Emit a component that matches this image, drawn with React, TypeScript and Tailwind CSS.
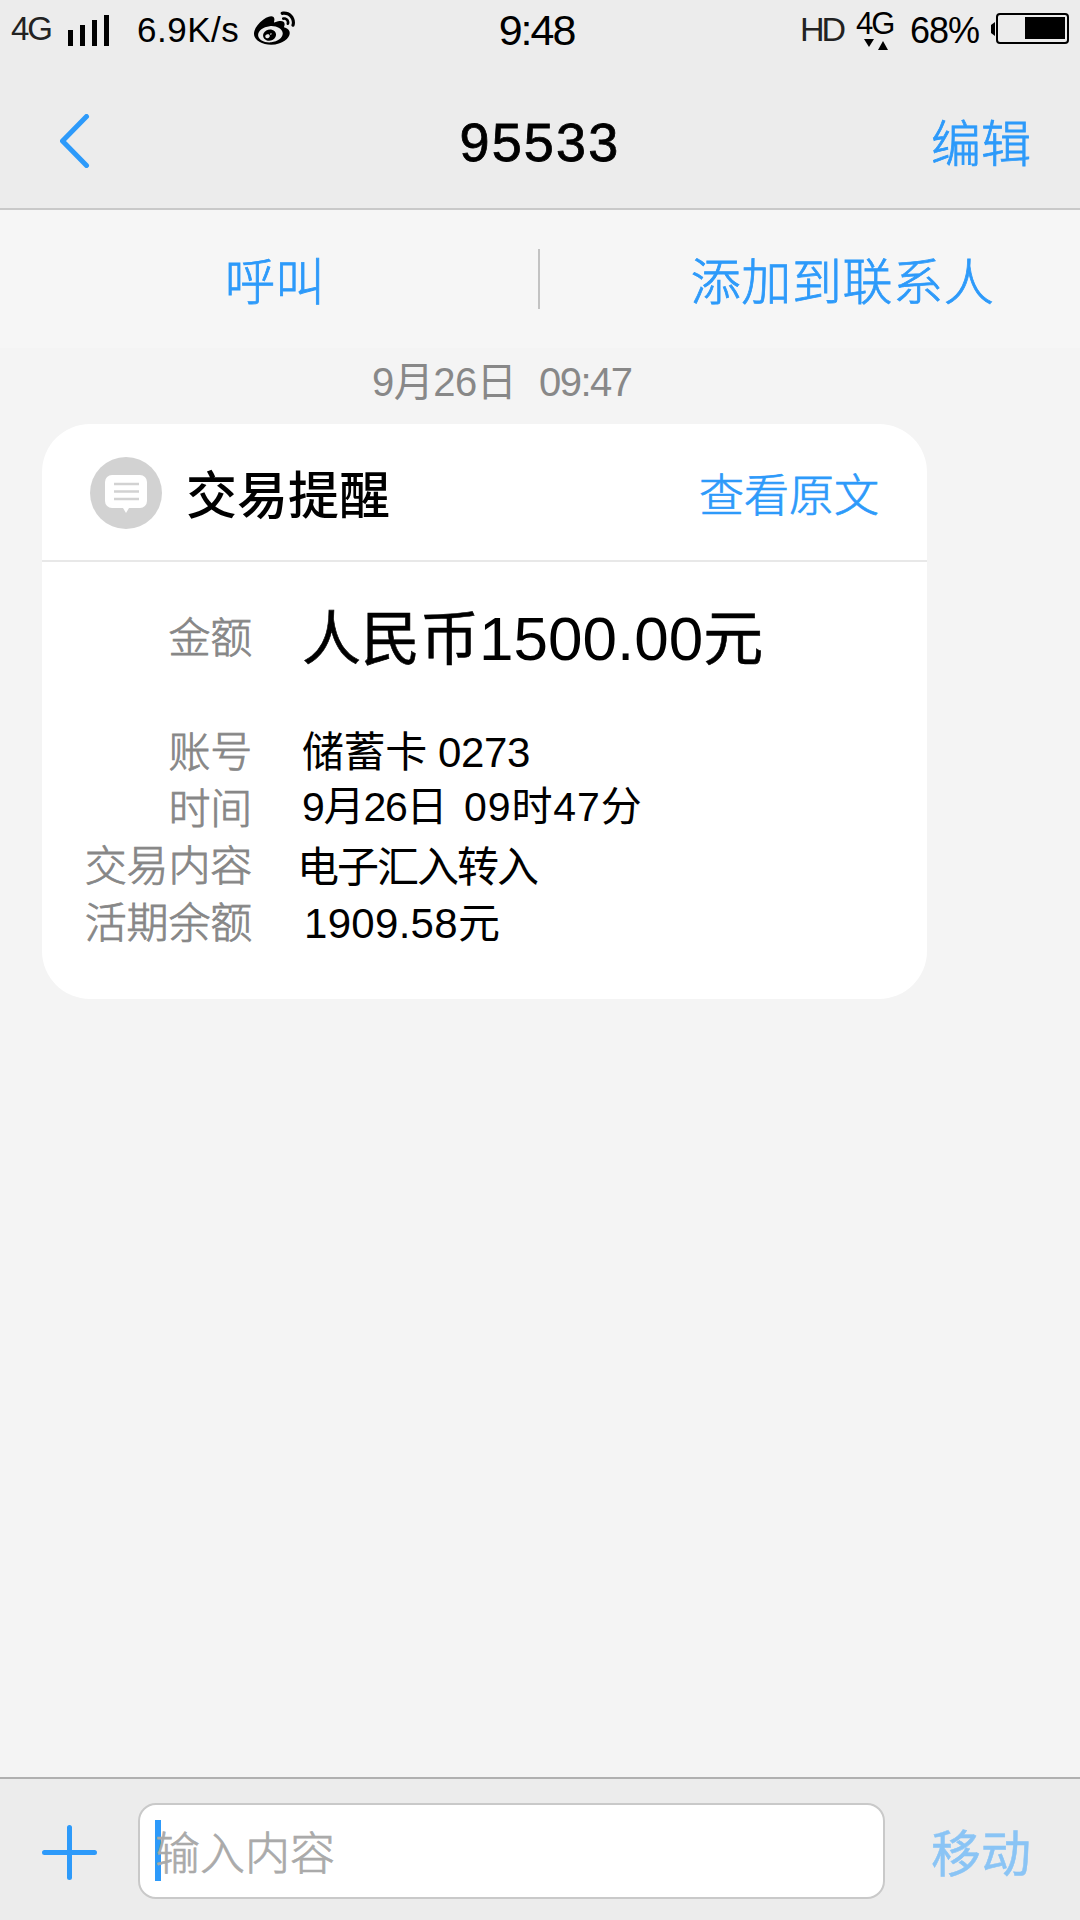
import React from "react";
import { FaWeibo } from "react-icons/fa";

interface DetailRowProps {
  label: string;
  children: React.ReactNode;
}

const DetailRow: React.FC<DetailRowProps> = ({ label, children }) => {
  return (
    <div className="flex h-[57px] items-center">
      <span className="w-[210px] shrink-0 pt-[1px] text-right text-[42px] leading-[57px] font-light tracking-[-0.2px] text-[#878787] [-webkit-text-stroke:0.8px_#878787]">
        {label}
      </span>
      {children}
    </div>
  );
};

const StatusBar = () => {
  return (
    <div className="grid h-[58px] grid-cols-3 whitespace-nowrap">
      <div className="flex pl-[11px]">
        <span className="w-[57px] text-[33px] leading-[58px] tracking-[-2px] text-[#222]">4G</span>
        <svg className="mt-[15px] h-[31px] w-[41px]" viewBox="0 0 41 31">
          <path d="M0 15h5v16H0zM12 10h5v21h-5zM24 5h5v26h-5zM36 0h5v31h-5z" />
        </svg>
        <span className="ml-[28px] w-[117px] text-[35px] leading-[59px] tracking-[0.5px]">6.9K/s</span>
        <FaWeibo className="mt-[9px] size-[41px]" />
      </div>
      <div className="pr-[7px] text-center text-[43px] leading-[61px] tracking-[-2px]">9:48</div>
      <div className="flex justify-end pr-[11px]">
        <span className="w-[56px] text-[34px] leading-[58px] tracking-[-3px] text-[#222]">HD</span>
        <div className="flex w-[54px] flex-col">
          <span className="h-[39px] text-[31px] leading-[48px] tracking-[-2px]">4G</span>
          <svg className="ml-[8px] h-[11px] w-[26px]" viewBox="0 0 26 11">
            <path d="M0 0h10L5 8zM14 11h10L19 2z" />
          </svg>
        </div>
        <span className="w-[81px] text-[36px] leading-[61px] tracking-[-1px]">68%</span>
        <svg className="mt-[13px] h-[31px] w-[78px]" viewBox="0 0 78 31">
          <path d="M4 9v14L0 20v-8z" />
          <rect x="6" y="1" width="71" height="29" rx="3" fill="none" stroke="#000" strokeWidth="2" />
          <rect x="34" y="4" width="40" height="22" />
        </svg>
      </div>
    </div>
  );
};

const Header = () => {
  return (
    <div className="grid h-[152px] grid-cols-3 items-start border-b-2 border-[#c9c9c9]">
      <svg className="mt-[56px] ml-[60px] h-[54px] w-[30px]" viewBox="0 0 30 54" fill="none">
        <path
          d="M26.500 2.500L2.500 27l24 24.500"
          stroke="#2d9afa"
          strokeWidth="5"
          strokeLinecap="round"
          strokeLinejoin="round"
        />
      </svg>
      <h1 className="pt-[51px] text-center text-[54px] leading-[66px] font-normal tracking-[2.2px] [-webkit-text-stroke:0.8px_#000]">
        95533
      </h1>
      <button className="pt-[54px] pr-[49px] text-right text-[50px] leading-[66px] font-light text-[#2d9afa] [-webkit-text-stroke:0.8px_#2d9afa]">
        编辑
      </button>
    </div>
  );
};

const BubbleIcon = () => {
  return (
    <svg className="mt-[2px] size-[72px] shrink-0" viewBox="0 0 72 72">
      <circle cx="36" cy="36" r="36" fill="#d2d2d2" />
      <path
        d="M22 18h28a7 7 0 0 1 7 7v19a7 7 0 0 1-7 7H39l-3 5-3-5H22a7 7 0 0 1-7-7V25a7 7 0 0 1 7-7z"
        fill="#fff"
      />
      <path d="M24 27h25M24 34.500h25M24 42h25" stroke="#d2d2d2" strokeWidth="2.500" />
    </svg>
  );
};

const App = () => {
  return (
    <div className="flex h-[1920px] w-[1080px] flex-col overflow-hidden bg-[#f4f4f4] font-['Liberation_Sans','Noto_Sans_CJK_SC',sans-serif] text-black">
      <div className="h-[210px] bg-[#ececec]">
        <StatusBar />
        <Header />
      </div>

      <div className="flex h-[138px] items-center bg-[#f6f6f6] text-[50px] leading-[64px] font-light text-[#2d9afa] [-webkit-text-stroke:0.8px_#2d9afa]">
        <button className="w-[538px] pt-[7px] pl-[12px] text-center">呼叫</button>
        <div className="h-[60px] w-[2px] bg-[#c3c3c3]" />
        <button className="flex-1 pt-[7px] pl-[65px] text-center tracking-[0.6px]">添加到联系人</button>
      </div>

      <div className="flex h-[76px] pl-[372px] text-[40px] leading-[68px] text-[#888]">
        <span className="w-[167px] tracking-[-0.5px]">9月26日</span>
        <span className="tracking-[-1.5px]">09:47</span>
      </div>

      <div className="ml-[42px] h-[575px] w-[885px] rounded-[48px] bg-white">
        <div className="flex h-[138px] items-center border-b-2 border-[#e8e8e8] px-[48px]">
          <BubbleIcon />
          <h2 className="ml-[24px] flex-1 pt-[10px] text-[51px] leading-[64px] font-medium">交易提醒</h2>
          <button className="pt-[10px] text-[45px] leading-[64px] font-light text-[#2d9afa] [-webkit-text-stroke:0.7px_#2d9afa]">
            查看原文
          </button>
        </div>
        <div className="flex h-[150px] items-center pt-[2px]">
          <span className="w-[210px] text-right text-[42px] font-light tracking-[-0.2px] text-[#878787] [-webkit-text-stroke:0.8px_#878787]">
            金额
          </span>
          <span className="ml-[50px] pt-[2px] text-[62px] leading-[80px]">
            <span className="text-[59px] [-webkit-text-stroke:0.6px_#000]">人民币</span>1500.00
            <span className="text-[60px] [-webkit-text-stroke:0.6px_#000]">元</span>
          </span>
        </div>
        <div className="mt-[11px]">
          <DetailRow label="账号">
            <span className="ml-[50px] pt-[1px] text-[42px] tracking-[-0.4px]">储蓄卡 0273</span>
          </DetailRow>
          <DetailRow label="时间">
            <span className="ml-[50px] w-[162px] pb-[2px] text-[41px] tracking-[-1.2px]">9月26日</span>
            <span className="pb-[2px] text-[41px] tracking-[0.9px]">09时47分</span>
          </DetailRow>
          <DetailRow label="交易内容">
            <span className="ml-[45px] pt-[4px] text-[42px] tracking-[-2px]">电子汇入转入</span>
          </DetailRow>
          <DetailRow label="活期余额">
            <span className="ml-[52px] pt-[2px] text-[42px] tracking-[0.3px]">1909.58元</span>
          </DetailRow>
        </div>
      </div>

      <div className="mt-auto flex h-[143px] items-center border-t-2 border-[#b0b0b0] bg-[#ececec] pt-[2px] pl-[42px]">
        <svg className="mt-[3px] h-[55px] w-[55px]" viewBox="0 0 55 55">
          <path d="M27.500 2.500v50M2.500 27.500h50" stroke="#2d9afa" strokeWidth="5" strokeLinecap="round" />
        </svg>
        <div className="ml-[41px] flex h-[96px] w-[747px] items-center rounded-[18px] border-2 border-[#c9c9c9] bg-white pl-[15px]">
          <div className="h-[61px] w-[6px] bg-[#2d9afa]" />
          <span className="relative -ml-[6px] pt-[8px] text-[45px] leading-[64px] font-light text-[#aaa] [-webkit-text-stroke:0.7px_#aaa]">
            输入内容
          </span>
        </div>
        <button className="ml-[46px] pt-[9px] text-[50px] leading-[64px] text-[#8ac4f5] [-webkit-text-stroke:0.5px_#8ac4f5]">
          移动
        </button>
      </div>
    </div>
  );
};

export default App;
